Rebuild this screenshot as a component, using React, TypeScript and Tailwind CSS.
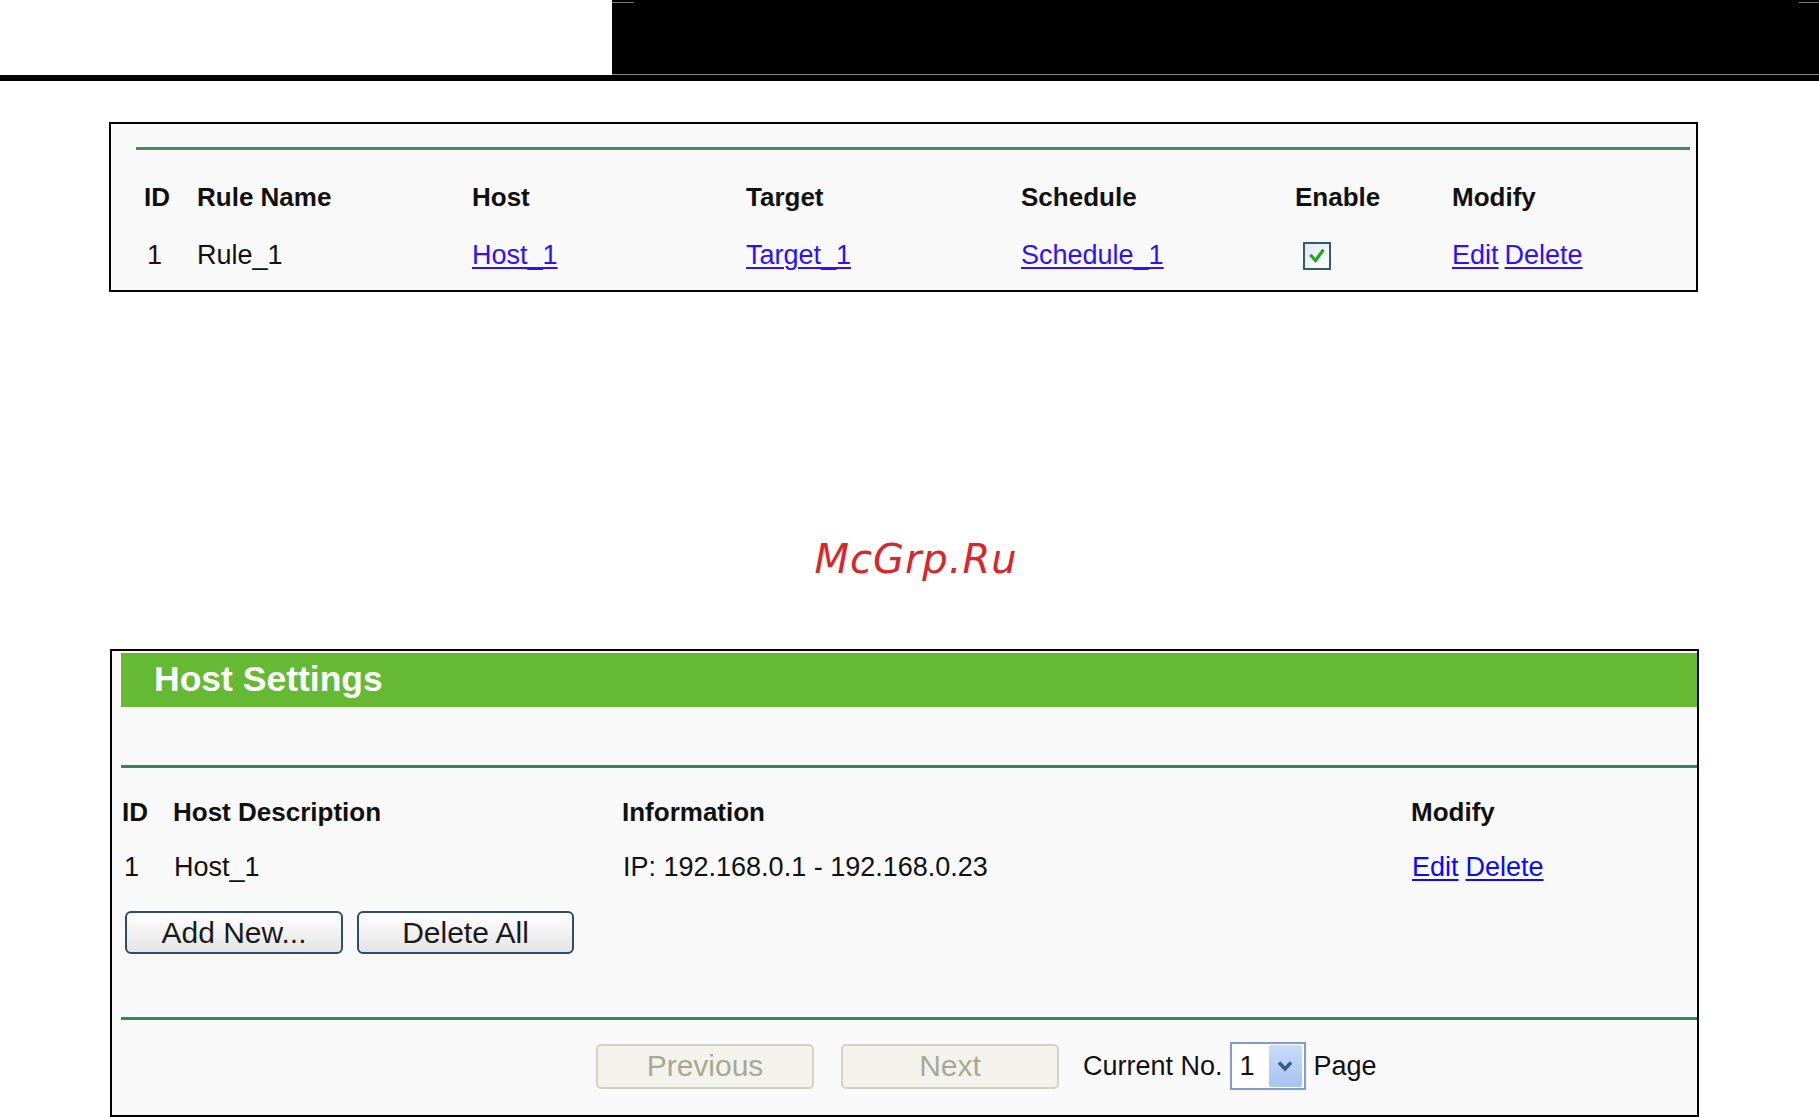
import React from "react";

const linkTop = "text-[#2d10ff] underline underline-offset-[3px] decoration-[2px]";
const linkBot = "text-[#0a0aff] underline underline-offset-[3px] decoration-[2px]";

function Checkbox() {
  return (
    <span className="flex h-[28px] w-[28px] items-center justify-center border-2 border-[#2d5a7e] bg-gradient-to-br from-[#e3e9ef] to-white">
      <svg width="18" height="18" viewBox="0 0 18 18">
        <path d="M3.5 9 L7.5 13.5 L14.5 4" fill="none" stroke="#1fa51f" strokeWidth="3.2" strokeLinecap="square" />
      </svg>
    </span>
  );
}

export default function App() {
  return (
    <div className="relative h-[1117px] w-[1819px] overflow-hidden bg-white font-['Liberation_Sans',Arial,sans-serif] text-[#111]">
      {/* top header */}
      <div className="flex h-[75px]">
        <div className="w-[612px] bg-white" />
        <div className="relative flex-1 bg-black border-b border-[#8a8a8a]">
          <span className="absolute left-0 top-[2px] h-[1px] w-[22px] bg-[#777]" />
          <span className="absolute right-0 top-[2px] h-[1px] w-[20px] bg-[#777]" />
        </div>
      </div>
      <div className="h-[6px] bg-black" />

      {/* top table box */}
      <div className="ml-[109px] mt-[41px] h-[170px] w-[1589px] border-2 border-black bg-[#f9f9f9]">
        <div className="ml-[25px] mr-[6px] mt-[23px] h-[3px] bg-[#3f8d5e]" />
        <div className="mt-[27px] grid grid-cols-[53px_275px_274px_275px_274px_157px_1fr] grid-rows-[40px_40px] gap-y-[18px] pl-[33px] text-[27px] leading-[30px]">
          <div className="flex items-center text-[26px] font-bold">ID</div>
          <div className="flex items-center text-[26px] font-bold">Rule Name</div>
          <div className="flex items-center text-[26px] font-bold">Host</div>
          <div className="flex items-center text-[26px] font-bold">Target</div>
          <div className="flex items-center text-[26px] font-bold">Schedule</div>
          <div className="flex items-center text-[26px] font-bold">Enable</div>
          <div className="flex items-center text-[26px] font-bold">Modify</div>

          <div className="flex items-center pl-[3px] text-[#2a0a0a]">1</div>
          <div className="flex items-center">Rule_1</div>
          <div className="flex items-center"><a className={linkTop}>Host_1</a></div>
          <div className="flex items-center"><a className={linkTop}>Target_1</a></div>
          <div className="flex items-center"><a className={linkTop}>Schedule_1</a></div>
          <div className="flex items-center pl-[8px] pt-[2px]"><Checkbox /></div>
          <div className="flex items-center gap-[6px]">
            <a className={linkTop}>Edit</a>
            <a className={linkTop}>Delete</a>
          </div>
        </div>
      </div>

      {/* watermark */}
      <div className="flex h-[357px] justify-center pl-[13px] pt-[245px]">
        <span className="h-[44px] font-['DejaVu_Sans',sans-serif] text-[40px] italic leading-[44px] tracking-[1px] text-[#d8262a]">
          McGrp.Ru
        </span>
      </div>

      {/* host settings box */}
      <div className="ml-[110px] h-[468px] w-[1589px] border-2 border-black bg-[#f9f9f9]">
        <div className="ml-[9px] mt-[2px] flex h-[54px] items-center bg-[#66b933] pl-[33px] text-[35.5px] font-bold text-white">
          Host Settings
        </div>
        <div className="ml-[9px] mt-[58px] h-[3px] bg-[#2f8a55]" />

        <div className="ml-[9px] mt-[24px] grid grid-cols-[52px_449px_789px_1fr] grid-rows-[40px_40px] gap-y-[15px] text-[27px] leading-[30px]">
          <div className="flex items-center pl-[1px] text-[26px] font-bold">ID</div>
          <div className="flex items-center text-[26px] font-bold">Host Description</div>
          <div className="flex items-center text-[26px] font-bold">Information</div>
          <div className="flex items-center text-[26px] font-bold">Modify</div>

          <div className="flex items-center pl-[3px]">1</div>
          <div className="flex items-center pl-[1px]">Host_1</div>
          <div className="flex items-center pl-[1px]">IP: 192.168.0.1 - 192.168.0.23</div>
          <div className="flex items-center gap-[7px] pl-[1px]">
            <a className={linkBot}>Edit</a>
            <a className={linkBot}>Delete</a>
          </div>
        </div>

        <div className="ml-[13px] mt-[24px] flex gap-[14px]">
          <button className="h-[43px] w-[218px] rounded-[6px] border-2 border-[#2c4d6e] bg-gradient-to-b from-white to-[#e4e4e4] text-[30px] leading-none text-[#1a1a1a]">
            Add New...
          </button>
          <button className="h-[43px] w-[217px] rounded-[6px] border-2 border-[#2c4d6e] bg-gradient-to-b from-white to-[#e4e4e4] text-[30px] leading-none text-[#1a1a1a]">
            Delete All
          </button>
        </div>

        <div className="ml-[9px] mt-[63px] h-[3px] bg-[#2f8a55]" />

        <div className="ml-[484px] mt-[22px] flex items-center text-[27px]">
          <button className="h-[45px] w-[218px] rounded-[5px] border-2 border-[#d2d2c4] bg-[#f3f3ec] text-[30px] leading-none text-[#a8a898]">
            Previous
          </button>
          <button className="ml-[27px] h-[45px] w-[218px] rounded-[5px] border-2 border-[#d2d2c4] bg-[#f3f3ec] text-[30px] leading-none text-[#a8a898]">
            Next
          </button>
          <span className="ml-[24px]">Current No.</span>
          <div className="ml-[7px] flex h-[48px] w-[76px] items-center justify-between border-2 border-[#7f9ccc] bg-white pl-[8px] pr-[2px]">
            <span>1</span>
            <span className="flex h-[42px] w-[33px] items-center justify-center rounded-[2px] bg-gradient-to-b from-[#c9dcf8] to-[#a9c3ee]">
              <svg width="16" height="12" viewBox="0 0 16 12">
                <path d="M2 2.5 L8 9 L14 2.5" fill="none" stroke="#3d5a8c" strokeWidth="3.5" />
              </svg>
            </span>
          </div>
          <span className="ml-[8px]">Page</span>
        </div>
      </div>
    </div>
  );
}
